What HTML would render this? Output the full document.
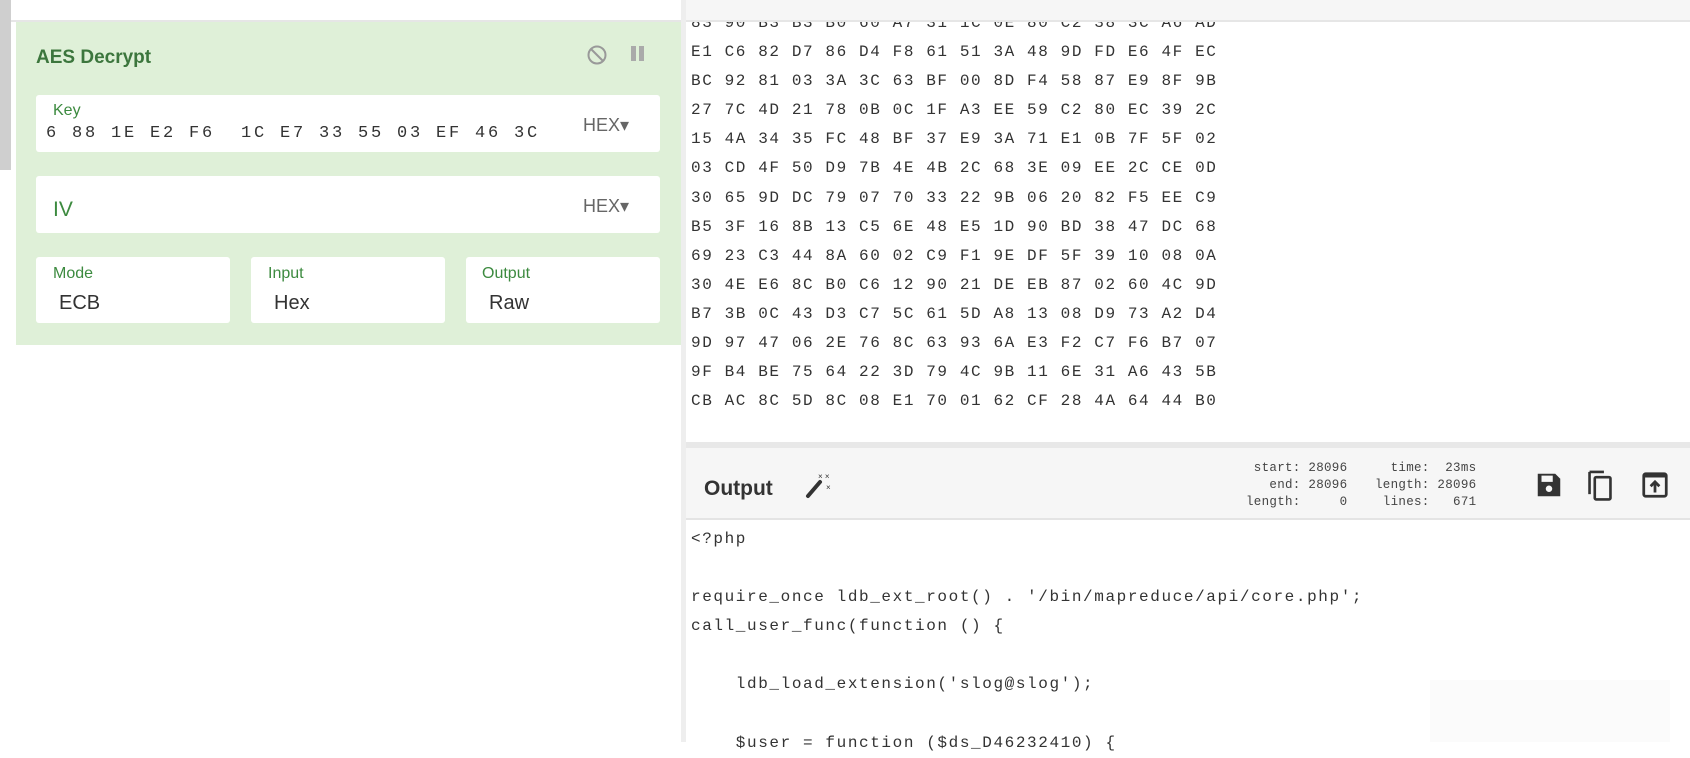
<!DOCTYPE html>
<html><head><meta charset="utf-8"><style>
*{margin:0;padding:0;box-sizing:border-box}
body{width:1690px;height:742px;overflow:hidden;background:#fff;position:relative;font-family:"Liberation Sans",sans-serif}
.a{position:absolute}
.mono{font-family:"Liberation Mono",monospace;font-size:16px;letter-spacing:1.6px;color:#333;white-space:pre}
.box{position:absolute;background:#fff;border-radius:3px}
.lbl{position:absolute;color:#3c8a3f;font-size:16px}
.val{position:absolute;color:#333;font-size:20px}
.hex{position:absolute;color:#666;font-size:18px}
</style></head><body>
<div class="a" style="left:0;top:0;width:11px;height:170px;background:#cfcfcf"></div>
<div class="a" style="left:11px;top:0;width:670px;height:22px;background:#fff;border-bottom:2px solid #e6e6e6"></div>
<div class="a" style="left:16px;top:22px;width:665px;height:323px;background:#dff0d8"></div>
<div class="a" style="left:36px;top:47px;font-size:19px;font-weight:bold;color:#3c763d">AES Decrypt</div>
<svg class="a" style="left:586px;top:44px" width="22" height="22" viewBox="0 0 22 22"><circle cx="11" cy="11" r="8.5" fill="none" stroke="#999" stroke-width="2"/><line x1="5" y1="5" x2="17" y2="17" stroke="#999" stroke-width="2"/></svg>
<div class="a" style="left:631px;top:46px;width:5px;height:15px;background:#aaa"></div>
<div class="a" style="left:639px;top:46px;width:5px;height:15px;background:#aaa"></div>

<div class="box" style="left:36px;top:95px;width:624px;height:57px"></div>
<div class="lbl" style="left:53px;top:102px">Key</div>
<div class="a mono" style="left:46px;top:124px;font-size:17px;letter-spacing:2.8px;width:510px;overflow:hidden">6 88 1E E2 F6  1C E7 33 55 03 EF 46 3C</div>
<div class="hex" style="left:583px;top:115px">HEX&#9662;</div>

<div class="box" style="left:36px;top:176px;width:624px;height:57px"></div>
<div class="lbl" style="left:53px;top:198px;font-size:21px">IV</div>
<div class="hex" style="left:583px;top:196px">HEX&#9662;</div>

<div class="box" style="left:36px;top:257px;width:194px;height:66px"></div>
<div class="lbl" style="left:53px;top:265px">Mode</div><div class="val" style="left:59px;top:292px">ECB</div>
<div class="box" style="left:251px;top:257px;width:194px;height:66px"></div>
<div class="lbl" style="left:268px;top:265px">Input</div><div class="val" style="left:274px;top:292px">Hex</div>
<div class="box" style="left:466px;top:257px;width:194px;height:66px"></div>
<div class="lbl" style="left:482px;top:265px">Output</div><div class="val" style="left:489px;top:292px">Raw</div>

<div class="a" style="left:681px;top:0;width:5px;height:742px;background:#eee"></div>
<div class="a" style="left:686px;top:0;width:1004px;height:22px;background:#f6f6f6;border-bottom:2px solid #e6e6e6;overflow:hidden"><span class="mono" style="position:absolute;left:682px;top:-8px;font-size:11px;letter-spacing:0;color:#666">lines: 1797</span></div>
<div class="a mono" style="left:691px;top:9px;line-height:29.1px;clip-path:inset(13px 0 0 0)">83 90 B3 B3 B0 60 A7 31 1C 0E 80 C2 38 3C A6 AD
E1 C6 82 D7 86 D4 F8 61 51 3A 48 9D FD E6 4F EC
BC 92 81 03 3A 3C 63 BF 00 8D F4 58 87 E9 8F 9B
27 7C 4D 21 78 0B 0C 1F A3 EE 59 C2 80 EC 39 2C
15 4A 34 35 FC 48 BF 37 E9 3A 71 E1 0B 7F 5F 02
03 CD 4F 50 D9 7B 4E 4B 2C 68 3E 09 EE 2C CE 0D
30 65 9D DC 79 07 70 33 22 9B 06 20 82 F5 EE C9
B5 3F 16 8B 13 C5 6E 48 E5 1D 90 BD 38 47 DC 68
69 23 C3 44 8A 60 02 C9 F1 9E DF 5F 39 10 08 0A
30 4E E6 8C B0 C6 12 90 21 DE EB 87 02 60 4C 9D
B7 3B 0C 43 D3 C7 5C 61 5D A8 13 08 D9 73 A2 D4
9D 97 47 06 2E 76 8C 63 93 6A E3 F2 C7 F6 B7 07
9F B4 BE 75 64 22 3D 79 4C 9B 11 6E 31 A6 43 5B
CB AC 8C 5D 8C 08 E1 70 01 62 CF 28 4A 64 44 B0</div>

<div class="a" style="left:686px;top:442px;width:1004px;height:6px;background:#e8e8e8"></div>
<div class="a" style="left:686px;top:448px;width:1004px;height:72px;background:#f6f6f6;border-bottom:2px solid #e4e4e4"></div>
<div class="a" style="left:704px;top:477px;font-size:21px;font-weight:bold;color:#333">Output</div>
<svg class="a" style="left:804px;top:470px" width="30" height="30" viewBox="0 0 30 30"><line x1="4" y1="26" x2="16" y2="12" stroke="#333" stroke-width="4" stroke-linecap="round"/><text x="14" y="9" font-size="8" fill="#333" font-family="Liberation Sans">× ×</text><text x="22" y="20" font-size="8" fill="#333" font-family="Liberation Sans">×</text></svg>
<div class="a mono" style="left:1246px;top:460px;font-size:12.5px;letter-spacing:0.3px;line-height:17px;color:#444;text-align:right">start: 28096
  end: 28096
length:     0</div>
<div class="a mono" style="left:1375px;top:460px;font-size:12.5px;letter-spacing:0.3px;line-height:17px;color:#444;text-align:right">  time:  23ms
length: 28096
 lines:   671</div>
<svg class="a" style="left:1534px;top:470px" width="30" height="30" viewBox="0 0 24 24"><path d="M3 3h14l4 4v14H3z" fill="#333"/><rect x="6" y="4.5" width="9" height="5" fill="#f6f6f6"/><circle cx="12" cy="15" r="2.6" fill="#f6f6f6"/></svg>
<svg class="a" style="left:1584px;top:468px" width="32" height="34" viewBox="0 0 24 26"><path d="M4 3v17" stroke="#333" stroke-width="2" fill="none"/><path d="M4 3h11" stroke="#333" stroke-width="2"/><rect x="8" y="7" width="12" height="17" rx="1" stroke="#333" stroke-width="2" fill="none"/></svg>
<svg class="a" style="left:1640px;top:470px" width="30" height="30" viewBox="0 0 24 24"><rect x="3" y="3" width="18" height="18" rx="1.5" stroke="#333" stroke-width="2.2" fill="none"/><rect x="3" y="3" width="18" height="3" fill="#333"/><path d="M12 18V10M8.5 13l3.5-3.5 3.5 3.5" stroke="#333" stroke-width="2.2" fill="none"/></svg>

<div class="a mono" style="left:691px;top:525px;line-height:29.1px">&lt;?php

require_once ldb_ext_root() . '/bin/mapreduce/api/core.php';
call_user_func(function () {

    ldb_load_extension('slog@slog');

    $user = function ($ds_D46232410) {</div>
<div class="a" style="left:1430px;top:680px;width:240px;height:62px;background:rgba(248,248,248,0.6)"></div>
</body></html>
